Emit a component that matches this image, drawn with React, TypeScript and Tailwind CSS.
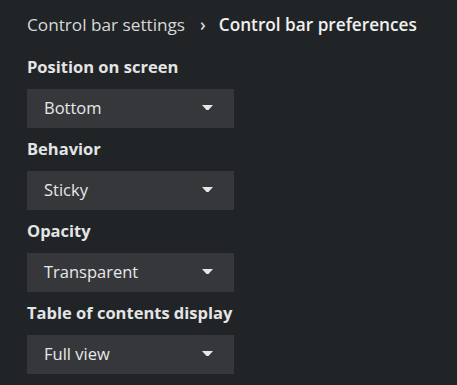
import React from "react";

const groups = [
  { label: "Position on screen", value: "Bottom" },
  { label: "Behavior", value: "Sticky" },
  { label: "Opacity", value: "Transparent" },
  { label: "Table of contents display", value: "Full view" },
];

function Caret() {
  return (
    <svg width="11" height="6" viewBox="0 0 11 6" className="block -mt-[2px]">
      <path d="M0 0 L11 0 L6.5 5 L4.5 5 Z" fill="#e6e6e6" />
    </svg>
  );
}

export default function App() {
  return (
    <div
      className="w-full h-[385px] bg-[#212427] px-[27px] pt-[13px] text-[#e8e8e8]"
      style={{ fontFamily: '"Open Sans", "Noto Sans", sans-serif' }}
    >
      <div className="flex items-center h-[24px] text-[17.2px]">
        <span className="text-[#d8d8d8]">Control bar settings</span>
        <span className="ml-[15px] mr-[13px] text-[#d8d8d8] font-semibold">›</span>
        <span className="font-semibold text-[#f0f0f0]">Control bar preferences</span>
      </div>
      <div className="mt-[18px] flex flex-col gap-[9px]">
        {groups.map((g) => (
          <div key={g.label} className="flex flex-col">
            <div className="h-[24px] flex items-center text-[16.5px] font-bold text-[#e4e4e4]">
              {g.label}
            </div>
            <div className="mt-[10px] w-[207px] h-[39px] bg-[#36373b] flex items-center justify-between pl-[17px] pr-[21px]">
              <span className="text-[16.5px] text-[#e8e8e8]">{g.value}</span>
              <Caret />
            </div>
          </div>
        ))}
      </div>
    </div>
  );
}
